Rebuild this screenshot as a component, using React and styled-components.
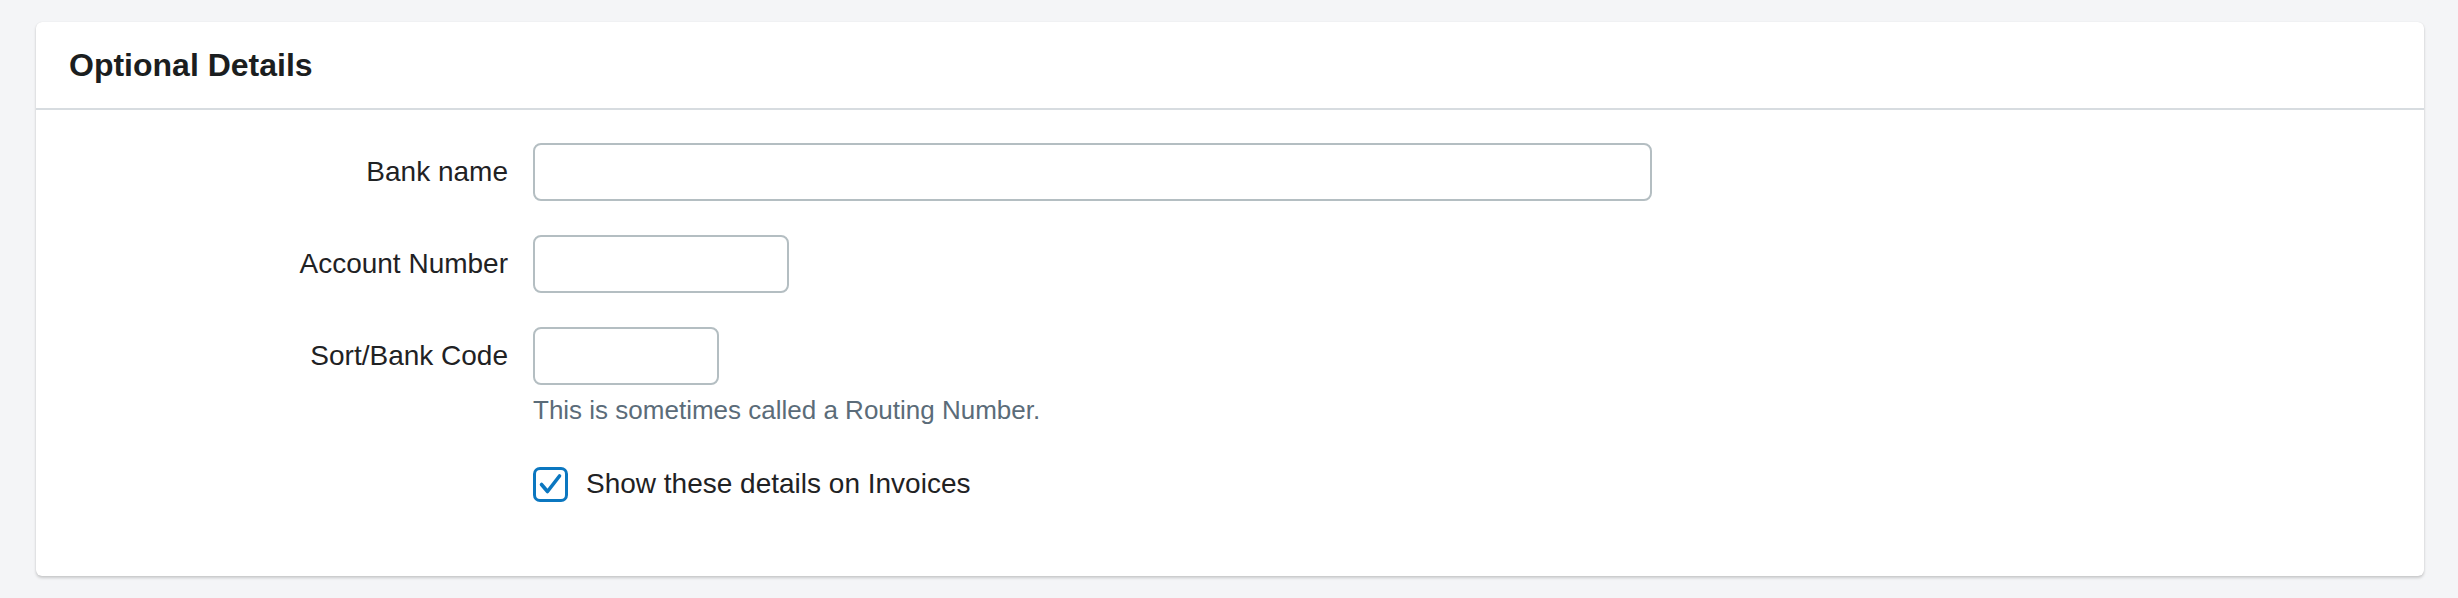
import styled, { createGlobalStyle } from "styled-components";

const GlobalStyle = createGlobalStyle`
  html, body {
    margin: 0;
    padding: 0;
    background: #f4f5f7;
    font-family: "Liberation Sans", Arial, sans-serif;
  }
`;

const fields = [
  { label: "Bank name", width: 1119 },
  { label: "Account Number", width: 256 },
  { label: "Sort/Bank Code", width: 186, hint: "This is sometimes called a Routing Number." },
];

const App = () => {
  return (
    <Page>
      <GlobalStyle />
      <Card>
        <CardHeader>
          <Title>Optional Details</Title>
        </CardHeader>
        <CardBody>
          {fields.map((f) => (
            <Field key={f.label}>
              <Row>
                <Label>{f.label}</Label>
                <Input type="text" $width={f.width} />
              </Row>
              {f.hint && <Hint>{f.hint}</Hint>}
            </Field>
          ))}
          <CheckRow>
            <CheckBox>
              <svg width="29" height="29" viewBox="0 0 29 29">
                <path
                  d="M5.5 14.5 L11.5 21.5 L23.5 6"
                  fill="none"
                  stroke="#0b77c0"
                  strokeWidth="3.6"
                  strokeLinecap="round"
                  strokeLinejoin="round"
                />
              </svg>
            </CheckBox>
            <CheckLabel>Show these details on Invoices</CheckLabel>
          </CheckRow>
        </CardBody>
      </Card>
    </Page>
  );
};

export default App;

const Page = styled.div`
  padding: 22px 34px 22px 36px;
`;

const Card = styled.div`
  background: #fff;
  border-radius: 6px;
  box-shadow: 0 2px 3px rgba(0, 0, 0, 0.18), 0 0 1px rgba(0, 0, 0, 0.12);
`;

const CardHeader = styled.div`
  height: 86px;
  display: flex;
  align-items: center;
  padding-left: 33px;
  border-bottom: 2px solid #d7dce0;
`;

const Title = styled.h2`
  margin: 0;
  font-size: 32px;
  font-weight: 700;
  color: #1b1e20;
`;

const CardBody = styled.div`
  padding: 33px 0 74px 0;
  display: flex;
  flex-direction: column;
  gap: 34px;
`;

const Field = styled.div`
  display: flex;
  flex-direction: column;
`;

const Row = styled.div`
  display: flex;
  align-items: center;
  gap: 25px;
`;

const Label = styled.label`
  width: 472px;
  text-align: right;
  font-size: 28px;
  color: #1f2224;
`;

const Input = styled.input`
  box-sizing: border-box;
  width: ${(p) => p.$width}px;
  height: 58px;
  border: 2px solid #b4bec2;
  border-radius: 8px;
  background: #fff;
  outline: none;
  font-size: 28px;
  padding: 0 14px;
`;

const Hint = styled.div`
  margin: 7px 0 0 497px;
  font-size: 26px;
  line-height: 36px;
  color: #5b6c79;
`;

const CheckRow = styled.div`
  display: flex;
  align-items: center;
  gap: 18px;
  margin-left: 497px;
  margin-top: 4px;
  height: 36px;
`;

const CheckBox = styled.span`
  box-sizing: border-box;
  width: 35px;
  height: 35px;
  border: 3px solid #0b77c0;
  border-radius: 7px;
  display: flex;
  align-items: center;
  justify-content: center;
  background: #fff;
`;

const CheckLabel = styled.span`
  font-size: 28px;
  line-height: 36px;
  color: #1f2224;
`;
